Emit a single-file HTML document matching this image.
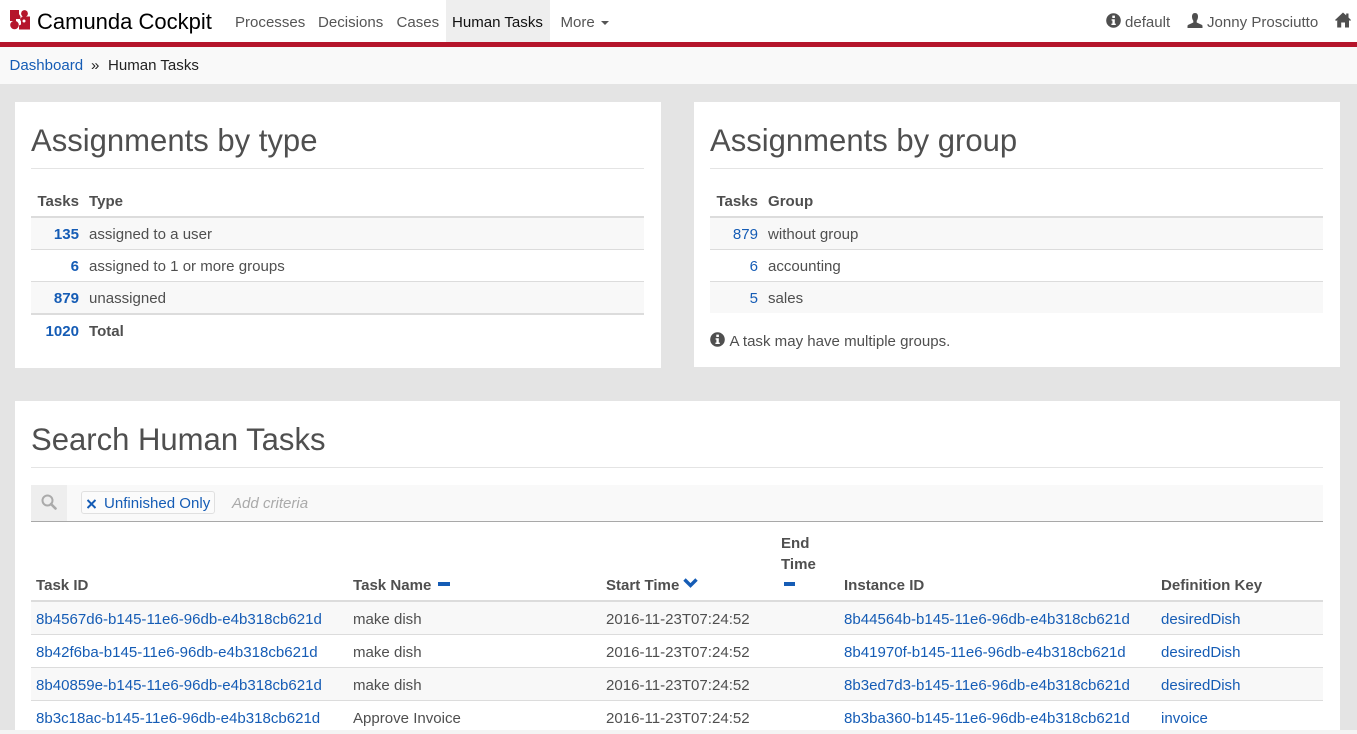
<!DOCTYPE html>
<html>
<head>
<meta charset="utf-8">
<style>
html,body{margin:0;padding:0;width:1357px;height:734px;overflow:hidden;background:#e4e4e4;}
body{font-family:"Liberation Sans",sans-serif;font-size:15.05px;color:#4f4f4f;position:relative;}
div,span,a,svg{position:absolute;}
.t{white-space:nowrap;line-height:20px;margin-top:1px;}
.l{color:#155cb5;}
.b{font-weight:bold;}
.nav{color:#555;}
.r{text-align:right;}
.h{font-size:31.05px;line-height:36px;color:#4f4f4f;white-space:nowrap;margin-top:1px;}
</style>
</head>
<body>
<!-- header -->
<div style="left:0;top:0;width:1357px;height:42px;background:#fff"></div>
<div style="left:0;top:42px;width:1357px;height:5px;background:#b5152b"></div>
<div style="left:446px;top:0;width:104px;height:42px;background:#eeeeee"></div>
<svg style="left:10px;top:10px" width="20" height="20" viewBox="0 0 20 20"><path d="M0 0h9v4l1.500 2.500V9H6v2H0z" fill="#b5152b"/><circle cx="14.500" cy="3.500" r="3.400" fill="#b5152b"/><circle cx="4.500" cy="15" r="4.300" fill="#b5152b"/><path d="M12 6.500h8V19.500H9v-4l2-1V11.500L10 9.500z" fill="#b5152b"/><circle cx="14" cy="11" r="1.500" fill="#fff"/></svg>
<div class="t" style="left:37px;top:9px;font-size:22px;line-height:24px;color:#000">Camunda Cockpit</div>
<div class="t nav" style="left:235px;top:12px">Processes</div>
<div class="t nav" style="left:318px;top:12px">Decisions</div>
<div class="t nav" style="left:396.500px;top:12px">Cases</div>
<div class="t" style="left:452px;top:12px;color:#111">Human Tasks</div>
<div class="t nav" style="left:560.500px;top:12px">More</div>
<div style="left:601px;top:21px;width:0;height:0;border-left:4px solid transparent;border-right:4px solid transparent;border-top:4px solid #555"></div>
<svg style="left:1106px;top:13px" width="15" height="15" viewBox="0 0 15 15"><circle cx="7.500" cy="7.500" r="7.300" fill="#4f4f4f"/><rect x="6.300" y="2.600" width="2.600" height="2.400" fill="#fff"/><path d="M5.600 6.200h3.200v4.400h1v1.400H5.400v-1.400h1V7.600h-.8z" fill="#fff"/></svg>
<div class="t nav" style="left:1125px;top:12px">default</div>
<svg style="left:1187px;top:13px" width="16" height="15" viewBox="0 0 16 15"><path d="M8 0c2 0 3 1.400 3 3.500 0 1.700-.5 3.200-1.300 4.200v1.800l4.900 2.200c.6.300.9.800.9 1.300V15H.500v-2c0-.5.300-1 .9-1.300l4.900-2.200V7.700C5.500 6.700 5 5.200 5 3.500 5 1.400 6 0 8 0z" fill="#4f4f4f"/></svg>
<div class="t nav" style="left:1207px;top:12px">Jonny Prosciutto</div>
<svg style="left:1335px;top:12px" width="16" height="16" viewBox="0 0 16 16"><path d="M8 .500L11.200 3.400V1.500h2.300v4L16 8l-1 1-1-1V15.500h-4V10.500H6.200v5h-4V8l-1 1-1.200-1z" fill="#4f4f4f"/></svg>

<!-- breadcrumb -->
<div style="left:0;top:47px;width:1357px;height:37px;background:#f9f9f9"></div>
<div class="t l" style="left:9.500px;top:55px">Dashboard</div>
<div class="t" style="left:91px;top:55px;color:#222">»</div>
<div class="t" style="left:108px;top:55px;color:#222">Human Tasks</div>

<!-- panel 1 -->
<div style="left:15px;top:102px;width:646px;height:266px;background:#fff"></div>
<div class="h" style="left:31px;top:122px">Assignments by type</div>
<div style="left:31px;top:168px;width:613px;height:1px;background:#e4e4e4"></div>
<div class="t b r" style="left:31px;top:191px;width:48px">Tasks</div>
<div class="t b" style="left:89px;top:191px">Type</div>
<div style="left:31px;top:218px;width:613px;height:31px;background:#f8f8f8"></div>
<div style="left:31px;top:282px;width:613px;height:31px;background:#f8f8f8"></div>
<div style="left:31px;top:216px;width:613px;height:2px;background:#dcdcdc"></div>
<div style="left:31px;top:249px;width:613px;height:1px;background:#dcdcdc"></div>
<div style="left:31px;top:281px;width:613px;height:1px;background:#dcdcdc"></div>
<div style="left:31px;top:313px;width:613px;height:2px;background:#dcdcdc"></div>
<div class="t l b r" style="left:31px;top:224px;width:48px">135</div>
<div class="t" style="left:89px;top:224px">assigned to a user</div>
<div class="t l b r" style="left:31px;top:256px;width:48px">6</div>
<div class="t" style="left:89px;top:256px">assigned to 1 or more groups</div>
<div class="t l b r" style="left:31px;top:288px;width:48px">879</div>
<div class="t" style="left:89px;top:288px">unassigned</div>
<div class="t l b r" style="left:31px;top:321px;width:48px">1020</div>
<div class="t b" style="left:89px;top:321px">Total</div>

<!-- panel 2 -->
<div style="left:694px;top:102px;width:646px;height:265px;background:#fff"></div>
<div class="h" style="left:710px;top:122px">Assignments by group</div>
<div style="left:710px;top:168px;width:613px;height:1px;background:#e4e4e4"></div>
<div class="t b r" style="left:710px;top:191px;width:48px">Tasks</div>
<div class="t b" style="left:768px;top:191px">Group</div>
<div style="left:710px;top:218px;width:613px;height:31px;background:#f8f8f8"></div>
<div style="left:710px;top:282px;width:613px;height:31px;background:#f8f8f8"></div>
<div style="left:710px;top:216px;width:613px;height:2px;background:#dcdcdc"></div>
<div style="left:710px;top:249px;width:613px;height:1px;background:#dcdcdc"></div>
<div style="left:710px;top:281px;width:613px;height:1px;background:#dcdcdc"></div>
<div class="t l r" style="left:710px;top:224px;width:48px">879</div>
<div class="t" style="left:768px;top:224px">without group</div>
<div class="t l r" style="left:710px;top:256px;width:48px">6</div>
<div class="t" style="left:768px;top:256px">accounting</div>
<div class="t l r" style="left:710px;top:288px;width:48px">5</div>
<div class="t" style="left:768px;top:288px">sales</div>
<svg style="left:710px;top:332px" width="15" height="15" viewBox="0 0 15 15"><circle cx="7.500" cy="7.500" r="7.300" fill="#4f4f4f"/><rect x="6.300" y="2.600" width="2.600" height="2.400" fill="#fff"/><path d="M5.600 6.200h3.200v4.400h1v1.400H5.400v-1.400h1V7.600h-.8z" fill="#fff"/></svg>
<div class="t" style="left:729.500px;top:331px">A task may have multiple groups.</div>

<!-- panel 3 -->
<div style="left:15px;top:401px;width:1325px;height:329px;background:#fff"></div>
<div class="h" style="left:31px;top:421px">Search Human Tasks</div>
<div style="left:31px;top:467px;width:1292px;height:1px;background:#e4e4e4"></div>
<div style="left:31px;top:485px;width:1292px;height:36px;background:#f9f9f9"></div>
<div style="left:31px;top:485px;width:36px;height:36px;background:#eeeeee"></div>
<div style="left:31px;top:521px;width:1292px;height:1px;background:#a8a8a8"></div>
<svg style="left:41px;top:494px" width="16" height="16" viewBox="0 0 16 16"><circle cx="6.500" cy="6.500" r="5" fill="none" stroke="#aaa" stroke-width="2"/><path d="M10 10l4.500 4.500" stroke="#aaa" stroke-width="2.600" stroke-linecap="round"/></svg>
<div style="left:81px;top:491px;width:132px;height:21px;background:#fbfbfb;border:1px solid #e0e0e0;border-radius:3px"></div>
<svg style="left:87px;top:499px" width="9" height="10" viewBox="0 0 9 10"><path d="M.5 1l8 8M8.500 1l-8 8" stroke="#155cb5" stroke-width="2"/></svg>
<div class="t l" style="left:104px;top:493px">Unfinished Only</div>
<div class="t" style="left:232px;top:493px;color:#aaa;font-style:italic">Add criteria</div>

<!-- table head -->
<div class="t b" style="left:36px;top:575px;color:#4f4f4f">Task ID</div>
<div class="t b" style="left:353px;top:575px;color:#4f4f4f">Task Name</div>
<div style="left:438px;top:582px;width:12px;height:4px;background:#155cb5"></div>
<div class="t b" style="left:606px;top:575px;color:#4f4f4f">Start Time</div>
<svg style="left:683px;top:577px" width="15" height="12" viewBox="0 0 15 12"><path d="M1.500 2.500l6 6 6-6" fill="none" stroke="#155cb5" stroke-width="3.400"/></svg>
<div class="t b" style="left:781px;top:533px;color:#4f4f4f">End</div>
<div class="t b" style="left:781px;top:554px;color:#4f4f4f">Time</div>
<div style="left:784px;top:582px;width:11px;height:4px;background:#155cb5"></div>
<div class="t b" style="left:844px;top:575px;color:#4f4f4f">Instance ID</div>
<div class="t b" style="left:1161px;top:575px;color:#4f4f4f">Definition Key</div>

<!-- rows -->
<div style="left:31px;top:602px;width:1292px;height:32px;background:#f8f8f8"></div>
<div style="left:31px;top:668px;width:1292px;height:32px;background:#f8f8f8"></div>
<div style="left:31px;top:600px;width:1292px;height:2px;background:#dcdcdc"></div>
<div style="left:31px;top:634px;width:1292px;height:1px;background:#dcdcdc"></div>
<div style="left:31px;top:667px;width:1292px;height:1px;background:#dcdcdc"></div>
<div style="left:31px;top:700px;width:1292px;height:1px;background:#dcdcdc"></div>

<div class="t l" style="left:36px;top:609px">8b4567d6-b145-11e6-96db-e4b318cb621d</div>
<div class="t" style="left:353px;top:609px">make dish</div>
<div class="t" style="left:606px;top:609px">2016-11-23T07:24:52</div>
<div class="t l" style="left:844px;top:609px">8b44564b-b145-11e6-96db-e4b318cb621d</div>
<div class="t l" style="left:1161px;top:609px">desiredDish</div>

<div class="t l" style="left:36px;top:642px">8b42f6ba-b145-11e6-96db-e4b318cb621d</div>
<div class="t" style="left:353px;top:642px">make dish</div>
<div class="t" style="left:606px;top:642px">2016-11-23T07:24:52</div>
<div class="t l" style="left:844px;top:642px">8b41970f-b145-11e6-96db-e4b318cb621d</div>
<div class="t l" style="left:1161px;top:642px">desiredDish</div>

<div class="t l" style="left:36px;top:675px">8b40859e-b145-11e6-96db-e4b318cb621d</div>
<div class="t" style="left:353px;top:675px">make dish</div>
<div class="t" style="left:606px;top:675px">2016-11-23T07:24:52</div>
<div class="t l" style="left:844px;top:675px">8b3ed7d3-b145-11e6-96db-e4b318cb621d</div>
<div class="t l" style="left:1161px;top:675px">desiredDish</div>

<div class="t l" style="left:36px;top:708px">8b3c18ac-b145-11e6-96db-e4b318cb621d</div>
<div class="t" style="left:353px;top:708px">Approve Invoice</div>
<div class="t" style="left:606px;top:708px">2016-11-23T07:24:52</div>
<div class="t l" style="left:844px;top:708px">8b3ba360-b145-11e6-96db-e4b318cb621d</div>
<div class="t l" style="left:1161px;top:708px">invoice</div>

<!-- footer strip -->
<div style="left:0;top:730px;width:1357px;height:4px;background:#f4f4f4"></div>
</body>
</html>
